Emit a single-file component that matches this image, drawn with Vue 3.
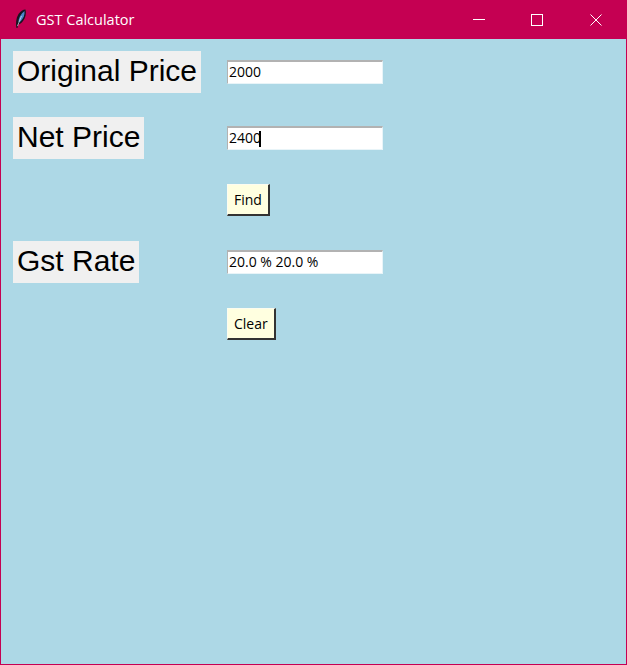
<script setup>
const rows = [
  { label: 'Original Price', value: '2000' },
  { label: 'Net Price', value: '2400', caret: true },
  { button: 'Find' },
  { label: 'Gst Rate', value: '20.0 % 20.0 %' },
  { button: 'Clear' }
]
</script>

<template>
  <div class="window">
    <header class="titlebar">
      <svg class="feather" width="12" height="20" viewBox="0 0 12 20">
        <path d="M1.500 19 C0.500 15 1 9 3.500 5 C5.500 2.500 8 0.500 10.500 0.500 C11.500 4 10.500 9 8 12 C6.500 14 4.500 15.500 3 15.500 L2.500 19 Z" fill="#15151f" />
        <path d="M3.500 13 C3.500 9 5.500 5 9.500 2 C10 5.500 8.500 9.500 5.500 12.500 Z" fill="#4a86c8" />
        <path d="M2.500 17 L6.500 7" stroke="#d5e2f0" stroke-width="0.700" fill="none" />
      </svg>
      <span class="title">GST Calculator</span>
      <div class="controls">
        <svg width="12" height="12" viewBox="0 0 12 12">
          <path d="M0 5.500 H12" stroke="#fff" stroke-width="1" />
        </svg>
        <svg width="12" height="12" viewBox="0 0 12 12">
          <rect x="0.500" y="0.500" width="11" height="11" fill="none" stroke="#fff" stroke-width="1" />
        </svg>
        <svg width="12" height="12" viewBox="0 0 12 12">
          <path d="M0.500 0.500 L11.500 11.500 M11.500 0.500 L0.500 11.500" stroke="#fff" stroke-width="1" />
        </svg>
      </div>
    </header>

    <main class="form">
      <template v-for="row in rows" :key="row.label || row.button">
        <template v-if="row.label">
          <label class="caption">{{ row.label }}</label>
          <div class="field">
            <input class="entry" type="text" :value="row.value" readonly />
            <span v-if="row.caret" class="caret"></span>
          </div>
        </template>
        <template v-else>
          <div></div>
          <div class="action">
            <button class="btn" type="button">{{ row.button }}</button>
          </div>
        </template>
      </template>
    </main>
  </div>
</template>

<style scoped>
.window {
  width: 627px;
  height: 665px;
  box-sizing: border-box;
  border: 1px solid #c50052;
  border-top: none;
  background: #add8e6;
  display: flex;
  flex-direction: column;
  overflow: hidden;
}

.titlebar {
  height: 39px;
  flex-shrink: 0;
  margin: 0 -1px;
  background: #c50052;
  color: #fff;
  display: flex;
  align-items: center;
  padding-left: 15px;
  padding-right: 25px;
}

.feather {
  flex-shrink: 0;
  margin-top: -2px;
}

.title {
  margin-left: 9px;
  font-family: "Open Sans", sans-serif;
  font-size: 14.500px;
}

.controls {
  margin-left: auto;
  display: flex;
  gap: 46px;
}

.controls svg:last-child {
  margin-left: 1px;
}

.form {
  display: grid;
  grid-template-columns: 214px 156px;
  grid-template-rows: 42px 42px 34px 42px 34px;
  row-gap: 24px;
  padding: 12px 0 0 12px;
  justify-items: start;
  align-items: center;
}

.caption {
  height: 42px;
  padding: 0 4px;
  background: #f0f0f0;
  color: #000;
  font-family: "Liberation Sans", Arial, sans-serif;
  font-size: 30px;
  line-height: 39px;
  white-space: nowrap;
}

.field {
  position: relative;
  width: 156px;
  height: 24px;
}

.entry {
  display: block;
  width: 100%;
  height: 100%;
  box-sizing: border-box;
  margin: 0;
  padding: 0 0 2px 1px;
  border-style: solid;
  border-width: 2px 1px 1px 1px;
  border-color: #b2b2b2 #e8f4f8 #e8f4f8 #b2b2b2;
  background: #fff;
  color: #000;
  font-family: "Open Sans", sans-serif;
  font-size: 14px;
  outline: none;
}

.caret {
  position: absolute;
  left: 32px;
  top: 5px;
  width: 2px;
  height: 16px;
  background: #000;
}

.action {
  display: flex;
  align-items: center;
}

.btn {
  height: 32px;
  margin: 0;
  padding: 0 6px 0 6px;
  box-sizing: border-box;
  border-style: solid;
  border-width: 1px 2px 2px 1px;
  border-color: #fcfcf0 #333 #333 #fcfcf0;
  background: #ffffe0;
  color: #000;
  font-family: "Open Sans", sans-serif;
  font-size: 14px;
}
</style>
